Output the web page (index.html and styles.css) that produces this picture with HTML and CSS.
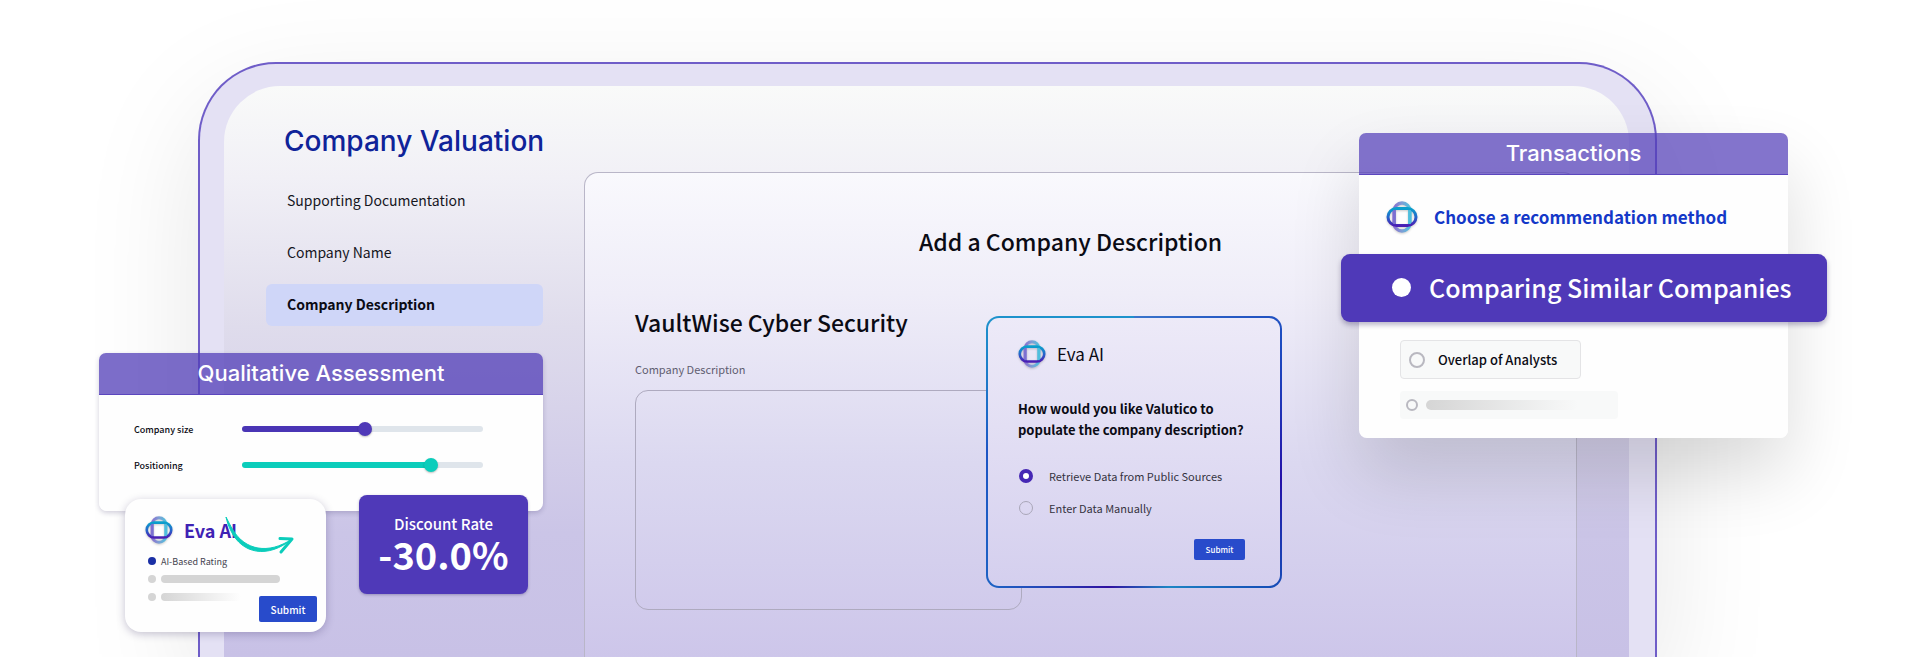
FILE: index.html
```
<!doctype html>
<html lang="en">
  <head>
    <meta charset="UTF-8" />
    <meta name="viewport" content="width=device-width, initial-scale=1.0" />
    <title>Company Valuation</title>
    <link rel="stylesheet" href="styles.css">
  </head>
  <body>
    <!-- shared logo -->
    <svg class="sprite" width="0" height="0" aria-hidden="true">
      <defs>
        <linearGradient id="ring-h" x1="0" y1="0" x2="0" y2="1">
          <stop offset="0" stop-color="#0aa0cc" />
          <stop offset="0.5" stop-color="#2467cc" />
          <stop offset="1" stop-color="#4a1fb4" />
        </linearGradient>
        <linearGradient id="ring-v" x1="0" y1="0" x2="1" y2="0">
          <stop offset="0" stop-color="#8a70cf" />
          <stop offset="0.5" stop-color="#7d9fd6" />
          <stop offset="1" stop-color="#4fbfdd" />
        </linearGradient>
        <symbol id="logo" viewBox="0 0 32 32">
          <rect x="8" y="2" width="16" height="28" rx="8" fill="none" stroke="url(#ring-v)" stroke-width="3.4" />
          <rect x="2" y="7.500" width="28" height="17" rx="8.500" fill="none" stroke="url(#ring-h)" stroke-width="3" />
          <path d="M8.500 9v14" stroke="#7a70d2" stroke-width="2.6" />
          <path d="M23.500 9v14" stroke="#4fbfdd" stroke-width="2.6" />
        </symbol>
      </defs>
    </svg>

    <div class="hero">
      <div class="device">
        <div class="screen">
          <aside class="sidebar">
            <h1>Company Valuation</h1>
            <nav>
              <a href="#documentation">Supporting Documentation</a>
              <a href="#name">Company Name</a>
              <a href="#description" class="active">Company Description</a>
            </nav>
          </aside>

          <main class="panel">
            <h2 class="panel-title">Add a Company Description</h2>
            <h2 class="company">VaultWise Cyber Security</h2>
            <label for="description">Company Description</label>
            <textarea id="description"></textarea>

            <form class="eva-dialog">
              <div class="eva-head">
                <svg class="logo" aria-hidden="true"><use href="#logo" /></svg>
                <span>Eva AI</span>
              </div>
              <p class="question">How would you like Valutico to populate the company description?</p>
              <label class="option"><input type="radio" name="source" checked />Retrieve Data from Public Sources</label>
              <label class="option"><input type="radio" name="source" />Enter Data Manually</label>
              <button type="button" class="submit">Submit</button>
            </form>
          </main>
        </div>

        <section class="card assessment">
          <h2>Qualitative Assessment</h2>
          <div class="card-body">
            <div class="slider-row">
              <label for="size">Company size</label>
              <input type="range" id="size" class="size" value="51" />
            </div>
            <div class="slider-row">
              <label for="positioning">Positioning</label>
              <input type="range" id="positioning" class="positioning" value="80" />
            </div>
          </div>
        </section>

        <form class="rating">
          <div class="eva-head">
            <svg class="logo" aria-hidden="true"><use href="#logo" /></svg>
            <span>Eva AI</span>
          </div>
          <div class="rating-row"><span class="dot dot-on"></span>AI-Based Rating</div>
          <div class="rating-row"><span class="dot"></span><span class="bar"></span></div>
          <div class="rating-row"><span class="dot"></span><span class="bar bar-fade"></span></div>
          <button type="button" class="submit">Submit</button>
          <svg class="arrow" viewBox="0 0 70 38" aria-hidden="true">
            <path d="M1 0C2 5 4 10 6 14C17 37 43 42 67 22C43 38 20 33 8 13C5 8 3 4 1 0Z" fill="#0bcdbb" stroke="#0bcdbb" stroke-width="1" />
            <path d="M55 21.500L67 22L56 35" fill="none" stroke="#0bcdbb" stroke-width="3" stroke-linejoin="round" stroke-linecap="round" />
          </svg>
        </form>

        <div class="discount">
          <span>Discount Rate</span>
          <strong>-30.0%</strong>
        </div>

        <section class="card transactions">
          <h2>Transactions</h2>
          <div class="card-body">
            <div class="method-head">
              <svg class="logo" aria-hidden="true"><use href="#logo" /></svg>
              <h3>Choose a recommendation method</h3>
            </div>
            <label class="method-selected"><input type="radio" name="method" checked />Comparing Similar Companies</label>
            <label class="method"><input type="radio" name="method" />Overlap of Analysts</label>
            <div class="method-ghost"><span class="ring"></span><span class="bar bar-fade"></span></div>
          </div>
        </section>
      </div>
    </div>
  </body>
</html>
```
FILE: styles.css
```
* {
  box-sizing: border-box;
}

body {
  margin: 0;
  background-color: #fff;
  color: #0b0b14;
  font-family: 'Noto Sans CJK SC', 'Noto Sans', sans-serif;
  overflow: hidden;
}

h1,
h2,
h3,
p {
  margin: 0;
}

button,
input,
textarea {
  margin: 0;
  font-family: inherit;
}

.sprite {
  position: absolute;
}

.hero {
  display: flex;
  min-height: 100vh;
  padding: 62px 263px 0 198px;
}

/* device frame */
.device {
  position: relative;
  display: flex;
  flex: 1;
  padding: 22px 26px 0 24px;
  border: 2px solid #6f5dc8;
  border-bottom: none;
  border-radius: 78px 78px 0 0;
  background-color: #e4e1f4;
  box-shadow: 0 40px 120px rgba(0, 0, 0, 0.1);
}

.screen {
  display: flex;
  flex: 1;
  padding: 0 52px 0 42px;
  border-radius: 56px 56px 0 0;
  background: linear-gradient(#f9faf9, #f1f0f6 16%, #dfdcec 42%, #cbc5e7 78%, #c8c1e6);
}

.sidebar {
  width: 318px;
  padding: 34px 41px 0 0;
}

.sidebar h1 {
  padding-left: 18px;
  color: #0f2399;
  font-family: Inter, sans-serif;
  font-size: 28px;
  font-weight: 500;
  line-height: 42px;
  white-space: nowrap;
}

.sidebar nav {
  display: flex;
  flex-direction: column;
  gap: 10px;
  margin-top: 18px;
}

.sidebar a {
  padding: 0 21px 1px;
  border-radius: 6px;
  color: #16161e;
  font-size: 14px;
  line-height: 41px;
  text-decoration: none;
}

.sidebar .active {
  background-color: #cfd6f8;
  color: #0b0b14;
  font-weight: 700;
}

.panel {
  position: relative;
  flex: 1;
  margin-top: 86px;
  padding: 48px 50px;
  border: 1px solid #b9b6c8;
  border-bottom: none;
  border-radius: 14px 14px 0 0;
  background: linear-gradient(#f9f9fd, #efedf8 25%, #dbd8f0 60%, #cdc6ea);
}

.panel-title,
.company {
  font-size: 23px;
  font-weight: 500;
  line-height: 40px;
}

.panel-title {
  padding-left: 284px;
}

.company {
  margin-top: 41px;
}

.panel > label {
  display: block;
  margin-top: 17px;
  color: #5f5d70;
  font-size: 11px;
  line-height: 20px;
}

textarea {
  display: block;
  width: 387px;
  height: 220px;
  margin-top: 11px;
  border: 1px solid #aeaabf;
  border-radius: 13px;
  background-color: transparent;
  resize: none;
}

.logo {
  width: 32px;
  height: 32px;
  filter: drop-shadow(0 1px 1px rgba(0, 0, 0, 0.2));
}

.eva-head {
  display: flex;
  align-items: center;
}

.submit {
  border: none;
  border-radius: 2px;
  background-color: #284bcb;
  color: #fff;
  font-weight: 500;
}

/* dialog over the description field */
.eva-dialog {
  position: absolute;
  top: 143px;
  left: 401px;
  display: flex;
  flex-direction: column;
  width: 296px;
  padding: 20px 35px 26px 30px;
  border: 2px solid transparent;
  border-radius: 13px;
  background:
    linear-gradient(#edeaf8, #d4cfee) padding-box,
    conic-gradient(#3a76cc, #1c4bc0 15%, #2410a8 28%, #1553b8 38%, #1d86c4 46%, #3010a0 53%, #1d62c4 63%, #1d55c4 75%, #1d92cc 87%, #1d92cc) border-box;
}

.eva-head .logo {
  width: 28px;
  height: 28px;
}

.eva-dialog .eva-head {
  gap: 11px;
  font-size: 17px;
  line-height: 32px;
}

.question {
  margin-top: 28px;
  font-size: 13px;
  font-weight: 700;
  line-height: 21px;
}

.question + .option {
  margin-top: 20px;
}

.option {
  display: flex;
  align-items: center;
  gap: 16px;
  height: 32px;
  color: #35333f;
  font-size: 11px;
}

.option input {
  appearance: none;
  width: 14px;
  height: 14px;
  margin-left: 1px;
  border: 1px solid #a9a6b8;
  border-radius: 50%;
}

.option input:checked {
  border: 4px solid #4527b4;
  background-color: #fff;
}

.eva-dialog .submit {
  align-self: flex-end;
  width: 51px;
  height: 21px;
  margin-top: 15px;
  padding: 0;
  font-size: 8px;
}

/* floating cards */
.card {
  position: absolute;
  border-radius: 8px;
  box-shadow: 0 2px 5px rgba(30, 20, 80, 0.2);
}

.card h2 {
  border-bottom: 1px solid #5b46be;
  border-radius: 7px 7px 0 0;
  background-color: rgba(83, 63, 184, 0.76);
  color: #fff;
  font-family: Inter, sans-serif;
  font-size: 22px;
  font-weight: 500;
  line-height: 41px;
  text-align: center;
}

.card-body {
  border-radius: 0 0 8px 8px;
  background-color: #fefefe;
}

.assessment {
  top: 289px;
  left: -101px;
  width: 444px;
}

.assessment .card-body {
  padding: 16px 60px 28px 35px;
}

.slider-row {
  display: flex;
  align-items: center;
  height: 36px;
}

.slider-row label {
  width: 108px;
  font-size: 9px;
  font-weight: 500;
}

.slider-row input {
  appearance: none;
  flex: 1;
  height: 6px;
  border-radius: 3px;
}

.size {
  background: linear-gradient(to right, #4a35b5 51%, #dfe5eb 51%);
}

.positioning {
  background: linear-gradient(to right, #0bcdbb 79%, #dfe5eb 79%);
}

.slider-row input::-webkit-slider-thumb {
  appearance: none;
  width: 14px;
  height: 14px;
  border-radius: 50%;
  background-color: #4f39b8;
  box-shadow: 0 1px 2px rgba(0, 0, 0, 0.25);
}

.slider-row .positioning::-webkit-slider-thumb {
  background-color: #0bcdbb;
}

.rating {
  position: absolute;
  top: 435px;
  left: -75px;
  width: 201px;
  height: 133px;
  padding: 15px 20px;
  border-radius: 16px;
  background-color: #fefefe;
  box-shadow: 0 2px 8px rgba(30, 20, 80, 0.25);
}

.rating .eva-head {
  gap: 11px;
  color: #3f22b4;
  font-size: 18px;
  font-weight: 700;
  line-height: 32px;
}

.rating-row {
  display: flex;
  align-items: center;
  gap: 5px;
  height: 18px;
  padding-left: 3px;
  color: #45434f;
  font-size: 9px;
}

.eva-head + .rating-row {
  margin-top: 6px;
}

.dot {
  width: 8px;
  height: 8px;
  border-radius: 50%;
  background-color: #d5d5d5;
}

.dot-on {
  background-color: #1a2fa5;
}

.bar {
  width: 119px;
  height: 8px;
  border-radius: 4px;
  background-color: #d5d5d5;
}

.bar-fade {
  width: 80px;
  background: linear-gradient(to right, #d5d5d5, transparent);
}

.rating .submit {
  position: absolute;
  right: 9px;
  bottom: 10px;
  width: 58px;
  height: 26px;
  padding: 0;
  font-size: 10px;
}

.arrow {
  position: absolute;
  top: 18px;
  left: 100px;
  width: 70px;
  height: 38px;
}

.discount {
  position: absolute;
  top: 431px;
  left: 159px;
  display: flex;
  flex-direction: column;
  align-items: center;
  width: 169px;
  padding: 16px 0 23px;
  border-radius: 8px;
  background-color: #4f39b8;
  color: #fff;
  box-shadow: 0 1px 3px rgba(30, 20, 80, 0.3);
}

.discount span {
  font-size: 15px;
  font-weight: 500;
  line-height: 26px;
}

.discount strong {
  font-size: 38px;
  line-height: 34px;
}

.transactions {
  top: 69px;
  right: -133px;
  width: 429px;
  box-shadow: 0 36px 70px rgba(0, 0, 0, 0.14);
}

.transactions h2 {
  background-color: rgba(83, 63, 184, 0.72);
}

.transactions .card-body {
  padding: 24px 0 19px;
}

.method-head {
  display: flex;
  align-items: center;
  gap: 16px;
  height: 36px;
  padding-left: 27px;
}

.method-head h3 {
  color: #1438c8;
  font-size: 17px;
  font-weight: 700;
  line-height: 36px;
  white-space: nowrap;
}

/* wider than the card on both sides */
.method-selected {
  display: flex;
  align-items: center;
  gap: 18px;
  height: 68px;
  margin: 19px -39px 0 -18px;
  padding: 0 0 2px 51px;
  border-radius: 9px;
  background-color: #4f39b8;
  color: #fff;
  font-size: 25px;
  font-weight: 500;
  white-space: nowrap;
  box-shadow: 0 3px 5px rgba(30, 20, 80, 0.3);
}

.method-selected input {
  appearance: none;
  width: 19px;
  height: 19px;
  border-radius: 50%;
  background-color: #fff;
}

.method,
.method-ghost {
  display: flex;
  align-items: center;
  border-radius: 4px;
  background-color: #f8f9f9;
}

.method {
  gap: 13px;
  width: 181px;
  height: 39px;
  margin: 18px 0 0 41px;
  padding-left: 8px;
  border: 1px solid #e4e4e6;
  font-size: 13px;
  font-weight: 500;
}

.method input,
.ring {
  appearance: none;
  width: 16px;
  height: 16px;
  border: 2px solid #b9b8c0;
  border-radius: 50%;
}

.method-ghost {
  gap: 8px;
  width: 218px;
  height: 28px;
  margin: 12px 0 0 41px;
  padding-left: 6px;
}

.ring {
  width: 12px;
  height: 12px;
}

.method-ghost .bar {
  width: 152px;
  height: 10px;
  border-radius: 5px;
}
```
